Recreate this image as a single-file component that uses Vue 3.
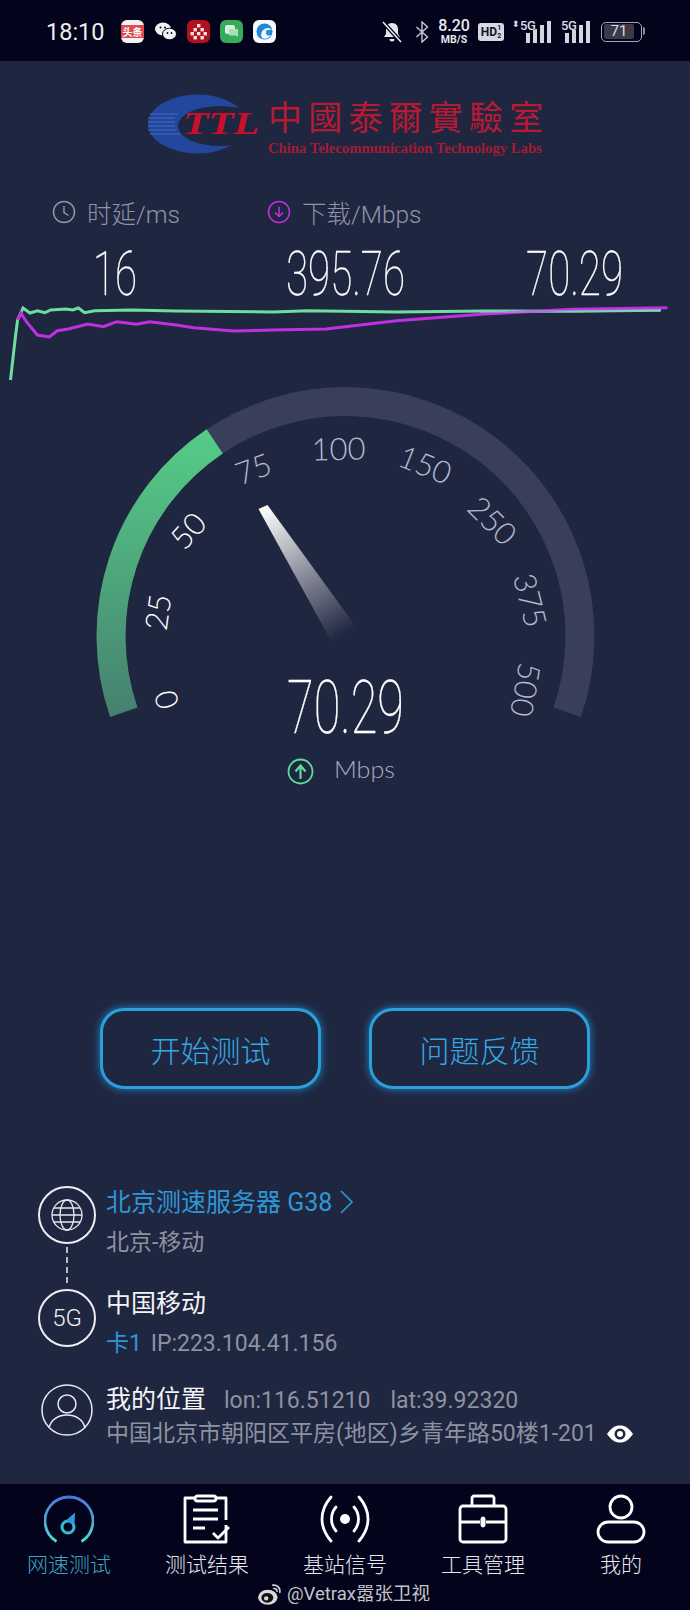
<script setup>
const ticks = [
  { t: '0', x: 165.5, y: 700, r: -105, on: true },
  { t: '25', x: 157, y: 612, r: -82, on: true },
  { t: '50', x: 187.5, y: 530, r: -48, on: true },
  { t: '75', x: 253, y: 468, r: -20, on: false },
  { t: '100', x: 338.5, y: 448, r: -1, on: false },
  { t: '150', x: 425.5, y: 464, r: 22, on: false },
  { t: '250', x: 493, y: 520, r: 45, on: false },
  { t: '375', x: 531, y: 600, r: 76, on: false },
  { t: '500', x: 526.5, y: 690, r: 100, on: false }
]

const greenLine = '10.5,380 15.4,337 17.6,320 23,308 30,313 37.4,310.7 45,312.7 50.7,310 66,309 72.7,310 78.4,308 84.6,312.7 94.7,310.7 132,310 176,311 273,312 308,310.7 396.5,312 484.6,311 572.7,311.3 660.8,310.3'
const purpleLine = '17.6,320 21,313 26.4,321.7 37.4,335 49.3,337 57.3,330.7 68.3,329 88,324 103.5,326.7 116.7,321.7 136.6,324.3 149.8,321.7 176,325 193.8,327.7 233.5,331 273,330 326,329 396.5,320.7 484.6,314 572.7,309.3 667.4,307.7'

const polar = (deg, r) => {
  const a = (deg - 90) * Math.PI / 180
  return (345.5 + r * Math.cos(a)).toFixed(1) + ' ' + (636 + r * Math.sin(a)).toFixed(1)
}
const arc = (from, to) => {
  const large = to - from > 180 ? 1 : 0
  return 'M' + polar(from, 234.5) + ' A234.5 234.5 0 ' + large + ' 1 ' + polar(to, 234.5)
}
const trackArc = arc(-34, 109)
const greenArc = arc(-109, -33.9)
const tabs = ['网速测试', '测试结果', '基站信号', '工具管理', '我的']
</script>

<template>
  <div class="page">
    <header class="status">
      <span class="time">18:10</span>
      <div class="apps">
        <span class="app toutiao">头条</span>
        <svg class="app" viewBox="0 0 23 23">
          <ellipse cx="9" cy="9" rx="8" ry="6.5" fill="#f2f2f2"/>
          <ellipse cx="15.5" cy="14" rx="7" ry="5.8" fill="#f2f2f2" stroke="#03031b"/>
          <circle cx="6.5" cy="7.5" r="1" fill="#03031b"/>
          <circle cx="11" cy="7.5" r="1" fill="#03031b"/>
          <circle cx="13.5" cy="13" r=".9" fill="#03031b"/>
          <circle cx="17.5" cy="13" r=".9" fill="#03031b"/>
        </svg>
        <svg class="app" viewBox="0 0 23 23">
          <rect width="23" height="23" rx="6" fill="#b3101f"/>
          <g fill="#f3e3e3">
            <rect x="10" y="4" width="3.4" height="3.4"/>
            <rect x="6.5" y="8" width="3.4" height="3.4"/>
            <rect x="13.5" y="8" width="3.4" height="3.4"/>
            <rect x="3.5" y="12" width="3.4" height="3.4"/>
            <rect x="10" y="12" width="3.4" height="3.4"/>
            <rect x="16.5" y="12" width="3.4" height="3.4"/>
            <rect x="6.5" y="16" width="3.4" height="3.4"/>
            <rect x="13.5" y="16" width="3.4" height="3.4"/>
          </g>
        </svg>
        <svg class="app" viewBox="0 0 23 23">
          <rect width="23" height="23" rx="6" fill="#36ab5c"/>
          <rect x="5" y="5" width="10" height="9" rx="2" fill="#d7f0dc"/>
          <path d="M9 9h9v8l-2-1.5H9z" fill="#a8dfb6"/>
        </svg>
        <svg class="app" viewBox="0 0 23 23">
          <rect width="23" height="23" rx="6" fill="#f6fafc"/>
          <circle cx="11.5" cy="11.5" r="8" fill="#1f86d8"/>
          <path d="M9 18c-2-4 0-9 5-10 2-.4 4 .4 5 2-3-1-6 0-6 3 0 2 2 3 5 2-2 3-6 5-9 3z" fill="#f6fafc"/>
          <circle cx="15" cy="12" r="2" fill="#16a0c8"/>
        </svg>
      </div>
      <div class="sys">
        <svg class="bell" viewBox="0 0 20 22">
          <path d="M10 2c-4 0-6 3-6 6v5l-2 3h16l-2-3V8c0-3-2-6-6-6z" fill="#e6e6ec"/>
          <path d="M7.500 18a2.500 2.500 0 0 0 5 0z" fill="#e6e6ec"/>
          <path d="M1 1l18 20" stroke="#03031b" stroke-width="4"/>
          <path d="M1 1l18 20" stroke="#e6e6ec" stroke-width="1.600"/>
        </svg>
        <svg class="bt" viewBox="0 0 14 22">
          <path d="M1.500 6l11 10-5.500 5V1l5.500 5-11 10" fill="none" stroke="#c9c9d2" stroke-width="1.400"/>
        </svg>
        <div class="speed"><b>8.20</b><span>MB/S</span></div>
        <div class="hd">HD<i>1<br>2</i></div>
        <div class="signal first">
          <span class="updown">⬍</span><span class="g">5G</span>
          <svg viewBox="0 0 27 22"><path d="M1 12h4v10H1zM8 8h4v14H8zM15 4h4v18h-4zM22 0h4v22h-4z" fill="#d4d4de"/></svg>
        </div>
        <div class="signal">
          <span class="g">5G</span>
          <svg viewBox="0 0 27 22"><path d="M1 12h4v10H1zM8 8h4v14H8zM15 4h4v18h-4zM22 0h4v22h-4z" fill="#d4d4de"/></svg>
        </div>
        <div class="battery"><div class="level">71</div></div>
      </div>
    </header>

    <div class="logo">
      <svg class="logo-mark" viewBox="0 0 112 62">
        <ellipse cx="49.500" cy="30" rx="49.500" ry="29.500" fill="#22479d"/>
        <ellipse cx="72" cy="32" rx="42" ry="20" fill="#1f2640"/>
        <path d="M2 20h28M0 24h27M0 28h27M0 32h27M0 36h28M2 40h30" stroke="#5a7cc8" stroke-width=".7"/>
        <text x="35" y="40" class="logo-ttl" textLength="76" lengthAdjust="spacingAndGlyphs">TTL</text>
      </svg>
      <div class="logo-text">
        <div class="logo-cn">中國泰爾實驗室</div>
        <div class="logo-en">China Telecommunication Technology Labs</div>
      </div>
    </div>

    <section class="metrics">
      <div class="labels">
        <div class="label ping">
          <svg viewBox="0 0 24 24"><circle cx="12" cy="12" r="10.500" fill="none" stroke="#8f93a8" stroke-width="1.500"/><path d="M12 6v6.500l4.500 3" fill="none" stroke="#8f93a8" stroke-width="1.500"/></svg>
          时延/ms
        </div>
        <div class="label">
          <svg viewBox="0 0 24 24"><circle cx="12" cy="12" r="10.500" fill="none" stroke="#c02fe0" stroke-width="1.500"/><path d="M12 6.500v10M8 12.500l4 4 4-4" fill="none" stroke="#c02fe0" stroke-width="1.500"/></svg>
          下载/Mbps
        </div>
      </div>
      <div class="values">
        <span><i>16</i></span>
        <span><i>395.76</i></span>
        <span><i>70.29</i></span>
      </div>
    </section>

    <svg class="chart" viewBox="0 300 690 85">
      <polyline :points="greenLine" fill="none" stroke="#6fdca0" stroke-width="3"/>
      <polyline :points="purpleLine" fill="none" stroke="#c02fe0" stroke-width="3"/>
      <path d="M480 312L661 310.300" stroke="#93c8d0" stroke-width="2.500" opacity=".5"/>
    </svg>

    <svg class="gauge" viewBox="0 385 690 420">
      <defs>
        <linearGradient id="greenFade" x1="0" y1="430" x2="0" y2="717" gradientUnits="userSpaceOnUse">
          <stop offset="0" stop-color="#55cd87"/>
          <stop offset="1" stop-color="#46806f"/>
        </linearGradient>
        <linearGradient id="needleFade" x1="263" y1="507" x2="344" y2="635" gradientUnits="userSpaceOnUse">
          <stop offset="0" stop-color="#ffffff"/>
          <stop offset="1" stop-color="#ffffff" stop-opacity="0"/>
        </linearGradient>
      </defs>
      <path :d="trackArc" fill="none" stroke="#393f5a" stroke-width="29"/>
      <path :d="greenArc" fill="none" stroke="url(#greenFade)" stroke-width="29"/>
      <text v-for="k in ticks" :key="k.t" class="tick" :class="{ on: k.on }" text-anchor="middle" dominant-baseline="central" :transform="`translate(${k.x} ${k.y}) rotate(${k.r})`">{{ k.t }}</text>
      <polygon points="258.500,509 267.500,505 357,628 331.700,642" fill="url(#needleFade)"/>
      <text x="287" y="733" class="big" textLength="117" lengthAdjust="spacingAndGlyphs">70.29</text>
      <circle cx="300.500" cy="771.500" r="12" fill="none" stroke="#5fdc9c" stroke-width="1.800"/>
      <path d="M300.500 779v-13M295.500 771.500l5-6 5 6" fill="none" stroke="#5fdc9c" stroke-width="2.200"/>
      <text x="334" y="778" class="unit" textLength="61" lengthAdjust="spacingAndGlyphs">Mbps</text>
    </svg>

    <div class="actions">
      <button class="action">开始测试</button>
      <button class="action">问题反馈</button>
    </div>

    <section class="info">
      <div class="row first">
        <div class="icons">
          <div class="circle">
            <svg viewBox="0 0 32 32" width="32" height="32">
              <g fill="none" stroke="#e8e8ee" stroke-width="1.300">
                <circle cx="16" cy="16" r="15"/>
                <ellipse cx="16" cy="16" rx="7" ry="15"/>
                <path d="M3 9h26M1 16h30M3 23h26"/>
              </g>
            </svg>
          </div>
          <div class="dash"></div>
        </div>
        <div class="lines">
          <div class="blue line-a">北京测速服务器 G38
            <svg class="more" viewBox="0 0 14 24"><path d="M1 1l11 11L1 23" fill="none" stroke="#2f97d5" stroke-width="1.600"/></svg>
          </div>
          <div class="gray">北京-移动</div>
        </div>
      </div>
      <div class="row second">
        <div class="icons"><div class="circle g5">5G</div></div>
        <div class="lines">
          <div class="white">中国移动</div>
          <div class="gray"><span class="blue">卡1</span> <span class="ip">IP:223.104.41.156</span></div>
        </div>
      </div>
      <div class="row third">
        <div class="icons">
          <svg class="person" viewBox="0 0 52 52">
            <g fill="none" stroke="#e8e8ee" stroke-width="1.500">
              <circle cx="26" cy="26" r="25"/>
              <circle cx="26" cy="20" r="9"/>
              <path d="M8 44c2-9 10-13 18-13s16 4 18 13"/>
            </g>
          </svg>
        </div>
        <div class="lines tight">
          <div class="white">我的位置<span class="coord first-coord">lon:116.51210</span><span class="coord">lat:39.92320</span></div>
          <div class="gray address">中国北京市朝阳区平房(地区)乡青年路50楼1-201
            <svg class="eye" viewBox="0 0 26 18"><path d="M0 9C4 3 8 .5 13 .5S22 3 26 9c-4 6-8 8.500-13 8.500S4 15 0 9z" fill="#fff"/><circle cx="13" cy="9" r="5.500" fill="#1f2640"/><circle cx="13" cy="9" r="3" fill="#fff"/></svg>
          </div>
        </div>
      </div>
    </section>

    <nav class="nav">
      <div v-for="(tab, i) in tabs" :key="tab" class="tab" :class="{ active: i === 0 }">
        <svg v-if="i === 0" viewBox="0 0 50 50">
          <defs>
            <linearGradient id="tabFade" x1="0" y1="0" x2="0" y2="1">
              <stop offset="0" stop-color="#4a76d8"/>
              <stop offset="1" stop-color="#4fdcd4"/>
            </linearGradient>
          </defs>
          <path d="M12.500 47.500A24 24 0 1 1 37.500 47.500" fill="none" stroke="url(#tabFade)" stroke-width="2.800"/>
          <circle cx="24" cy="33" r="6" fill="none" stroke="#36b8d8" stroke-width="3"/>
          <path d="M22 26.500L31 18.500 30.500 30.500z" fill="#2f9bdc"/>
        </svg>
        <svg v-else-if="i === 1" viewBox="0 0 50 50">
          <g fill="none" stroke="#fff" stroke-width="2.800" stroke-linejoin="round">
            <path d="M13 4H3v44h41V31M34 4h10v22"/>
            <rect x="13" y="2" width="21" height="5" rx="2.500"/>
            <path d="M11 16h25M11 25h25M11 34h12M31 39l5 5 11-11"/>
          </g>
        </svg>
        <svg v-else-if="i === 2" viewBox="0 0 50 50">
          <g fill="none" stroke="#fff" stroke-width="2.800" stroke-linecap="round">
            <path d="M11 3C-1 17-1 33 11 47M39 3c12 14 12 30 0 44M16 13c-6 7-6 17 0 24M34 13c6 7 6 17 0 24"/>
          </g>
          <circle cx="25" cy="25" r="5" fill="#fff"/>
        </svg>
        <svg v-else-if="i === 3" viewBox="0 0 50 50">
          <g fill="none" stroke="#fff" stroke-width="2.800" stroke-linejoin="round">
            <rect x="2" y="12" width="46" height="36" rx="3"/>
            <path d="M14 12V4c0-1 1-2 2-2h18c1 0 2 1 2 2v8M2 28h20M28 28h20"/>
            <rect x="23" y="23" width="4" height="10" rx="2" fill="#fff" stroke-width="1"/>
          </g>
        </svg>
        <svg v-else viewBox="0 0 50 50">
          <g fill="none" stroke="#fff" stroke-width="2.800">
            <circle cx="25" cy="13" r="11"/>
            <rect x="2" y="28" width="46" height="20" rx="10"/>
          </g>
        </svg>
        <span class="tab-name">{{ tab }}</span>
      </div>
      <div class="mark">
        <svg viewBox="0 0 24 22" width="26" height="24">
          <ellipse cx="10" cy="14" rx="9" ry="7" fill="#d8d8dc"/>
          <ellipse cx="9.500" cy="14.500" rx="5.500" ry="4.500" fill="#111"/>
          <circle cx="8.500" cy="15" r="2" fill="#d8d8dc"/>
          <path d="M14 3c4-1 8 2 7 7M15 6c2-.5 4 1 3.500 3" fill="none" stroke="#d8d8dc" stroke-width="1.500"/>
        </svg>
        <span>@Vetrax嚣张卫视</span>
      </div>
    </nav>
  </div>
</template>

<style scoped>
.page {
  width: 690px;
  height: 1610px;
  display: flex;
  flex-direction: column;
  background: #1f2640;
  font-family: Roboto, "Noto Sans CJK SC", sans-serif;
  overflow: hidden;
}
svg {
  display: block;
}

.status {
  height: 61px;
  flex: none;
  background: #03031b;
  display: flex;
  align-items: center;
  padding: 8px 0 0 46px;
  box-sizing: border-box;
  color: #eee;
}
.time {
  font-size: 23.500px;
  width: 75px;
  margin-top: -6px;
}
.apps {
  display: flex;
  gap: 10px;
  margin-top: -6px;
}
.app {
  width: 23px;
  height: 23px;
}
.toutiao {
  background: linear-gradient(#f4f0f0 22%, #dc4a52 22%, #dc4a52 78%, #f4f0f0 78%);
  border-radius: 6px;
  font-size: 10px;
  line-height: 23px;
  text-align: center;
  color: #fff;
  font-weight: 700;
  font-family: "Noto Sans CJK SC", sans-serif;
}
.sys {
  position: relative;
  margin-left: 106px;
  display: flex;
  align-items: center;
  margin-top: -6px;
}
.bell {
  width: 20px;
  height: 22px;
}
.bt {
  width: 14px;
  height: 22px;
  margin-left: 13px;
}
.speed {
  width: 32px;
  margin-left: 9px;
  text-align: center;
  color: #e8e8ee;
}
.speed b {
  display: block;
  font-size: 16px;
  line-height: 16px;
  font-weight: 500;
}
.speed span {
  display: block;
  font-size: 10.500px;
  line-height: 11px;
  font-weight: 700;
}
.hd {
  width: 26px;
  height: 18px;
  margin-left: 8px;
  background: #d8d8e0;
  border-radius: 3px;
  color: #14142a;
  font-size: 12px;
  font-weight: 700;
  line-height: 18px;
  display: flex;
  justify-content: center;
}
.hd i {
  font-style: normal;
  font-size: 7px;
  line-height: 8px;
  margin-top: 1px;
}
.signal {
  position: relative;
  width: 30px;
  height: 22px;
  margin-left: 9px;
}
.signal.first {
  width: 40px;
  margin-left: 8px;
}
.signal svg {
  position: absolute;
  right: 0;
  top: 0;
  width: 27px;
  height: 22px;
}
.signal .g {
  position: absolute;
  left: 0;
  top: -3px;
  font-size: 13px;
  font-weight: 500;
  letter-spacing: -0.5px;
  color: #dcdce4;
  z-index: 1;
  text-shadow: 1px 0 #03031b;
}
.signal.first .g {
  left: 8px;
}
.updown {
  position: absolute;
  left: 0;
  top: -2px;
  font-size: 9px;
  color: #dcdce4;
}
.battery {
  position: relative;
  width: 41px;
  height: 20px;
  margin-left: 10px;
  border: 1.500px solid #a9a9b4;
  border-radius: 5px;
  box-sizing: border-box;
  padding: 1.500px;
}
.battery::after {
  content: "";
  position: absolute;
  right: -4px;
  top: 4px;
  width: 2px;
  height: 8px;
  background: #8c8c98;
  border-radius: 0 2px 2px 0;
}
.level {
  width: 86%;
  height: 100%;
  background: #3a3a48;
  border-radius: 2px;
  font-size: 15px;
  line-height: 14px;
  text-align: center;
  color: #d8d8e0;
}

.logo {
  display: flex;
  margin: 33px 0 0 148px;
  height: 62px;
}
.logo-mark {
  width: 112px;
  height: 62px;
  flex: none;
}
.logo-ttl {
  font-family: "Liberation Serif", serif;
  font-style: italic;
  font-weight: 700;
  font-size: 32px;
  fill: #c8102e;
}
.logo-text {
  margin-left: 8px;
  width: 278px;
}
.logo-cn {
  font-family: "Noto Sans CJK TC", sans-serif;
  font-size: 34px;
  line-height: 44px;
  letter-spacing: 6.200px;
  color: #b81a33;
  white-space: nowrap;
}
.logo-en {
  font-family: "Liberation Serif", serif;
  font-weight: 700;
  font-size: 14.700px;
  line-height: 18px;
  color: #a31c36;
  white-space: nowrap;
  margin-top: 1px;
}

.metrics {
  margin-top: 41px;
}
.labels {
  display: flex;
  padding-left: 52px;
  height: 32px;
  margin-top: -1px;
}
.label {
  display: flex;
  align-items: center;
  gap: 11px;
  font-size: 24.500px;
  font-weight: 300;
  color: #8f93a8;
}
.label.ping {
  width: 215px;
}
.label svg {
  width: 24px;
  height: 24px;
}
.values {
  display: grid;
  grid-template-columns: repeat(3, 1fr);
  height: 70px;
  margin-top: 11px;
  color: #fff;
  text-align: center;
}
.values i {
  display: inline-block;
  font-style: normal;
  font-weight: 100;
  font-size: 62px;
  line-height: 70px;
  transform: scaleX(0.65);
  -webkit-text-stroke: 0.4px #fff;
}

.chart {
  width: 690px;
  height: 85px;
  margin-top: -9px;
  flex: none;
}
.gauge {
  width: 690px;
  height: 420px;
  flex: none;
}
.tick {
  font-family: Lato, sans-serif;
  font-weight: 300;
  font-size: 31px;
  fill: #b4b8cf;
}
.tick.on {
  fill: #fff;
}
.big {
  font-family: Roboto, sans-serif;
  font-weight: 100;
  font-size: 75px;
  fill: #fff;
  stroke: #fff;
  stroke-width: 0.4px;
}
.unit {
  font-family: Lato, sans-serif;
  font-weight: 300;
  font-size: 23px;
  fill: #a9adc6;
}

.actions {
  display: flex;
  gap: 48px;
  margin: 203px 0 0 100px;
}
.action {
  width: 221px;
  height: 81px;
  box-sizing: border-box;
  background: #1f2640;
  border: 3px solid #2a9fdb;
  border-radius: 24px;
  box-shadow: 0 0 9px #1f86c8;
  color: #33a8e4;
  font-family: "Noto Sans CJK SC", sans-serif;
  font-weight: 300;
  font-size: 30px;
  padding: 0;
}

.info {
  margin: 94px 0 0 38px;
}
.row {
  display: flex;
}
.row.first {
  height: 101px;
}
.row.second {
  height: 100px;
}
.icons {
  width: 58px;
  flex: none;
  display: flex;
  flex-direction: column;
  align-items: center;
  margin-right: 10px;
}
.circle {
  width: 58px;
  height: 58px;
  flex: none;
  box-sizing: border-box;
  border: 2px solid #eeeef2;
  border-radius: 50%;
  display: flex;
  align-items: center;
  justify-content: center;
  margin-top: 3px;
}
.g5 {
  margin-top: 5px;
  color: #eeeef2;
  font-size: 24px;
  font-weight: 300;
}
.dash {
  width: 0;
  height: 36px;
  margin-top: 3px;
  border-left: 2px dashed #b8bac6;
}
.person {
  width: 52px;
  height: 52px;
}
.lines {
  font-size: 25px;
  line-height: 40px;
  white-space: nowrap;
}
.lines.tight {
  line-height: 31px;
}
.line-a {
  display: flex;
  align-items: center;
  gap: 8px;
}
.more {
  width: 14px;
  height: 24px;
  margin-top: -3px;
}
.blue {
  color: #2f97d5;
}
.white {
  color: #f4f4f6;
}
.gray {
  color: #8d92a1;
  font-size: 23px;
}
.ip {
  margin-left: 3px;
  font-size: 23px;
}
.coord {
  color: #8d92a1;
  font-size: 23px;
  margin-left: 20px;
}
.first-coord {
  margin-left: 18px;
}
.address {
  display: flex;
  align-items: center;
  font-size: 23px;
  margin-top: 2px;
}
.eye {
  width: 26px;
  height: 18px;
  margin-left: 10px;
}

.nav {
  position: relative;
  margin-top: auto;
  height: 126px;
  flex: none;
  background: #03031b;
  display: grid;
  grid-template-columns: repeat(5, 138px);
  color: #e8e8ee;
}
.tab {
  display: flex;
  flex-direction: column;
  align-items: center;
  padding-top: 10px;
}
.tab svg {
  width: 50px;
  height: 50px;
}
.tab-name {
  font-family: "Noto Sans CJK SC", sans-serif;
  font-weight: 300;
  font-size: 21px;
  line-height: 30px;
  margin-top: 4px;
}
.tab.active .tab-name {
  color: #3ca7c2;
}
.mark {
  position: absolute;
  left: 257px;
  top: 98px;
  display: flex;
  align-items: center;
  gap: 4px;
  color: #c2c3c9;
  font-size: 18.500px;
  line-height: 24px;
  white-space: nowrap;
}
</style>

<style>
html, body {
  background: #1f2640;
}
</style>
